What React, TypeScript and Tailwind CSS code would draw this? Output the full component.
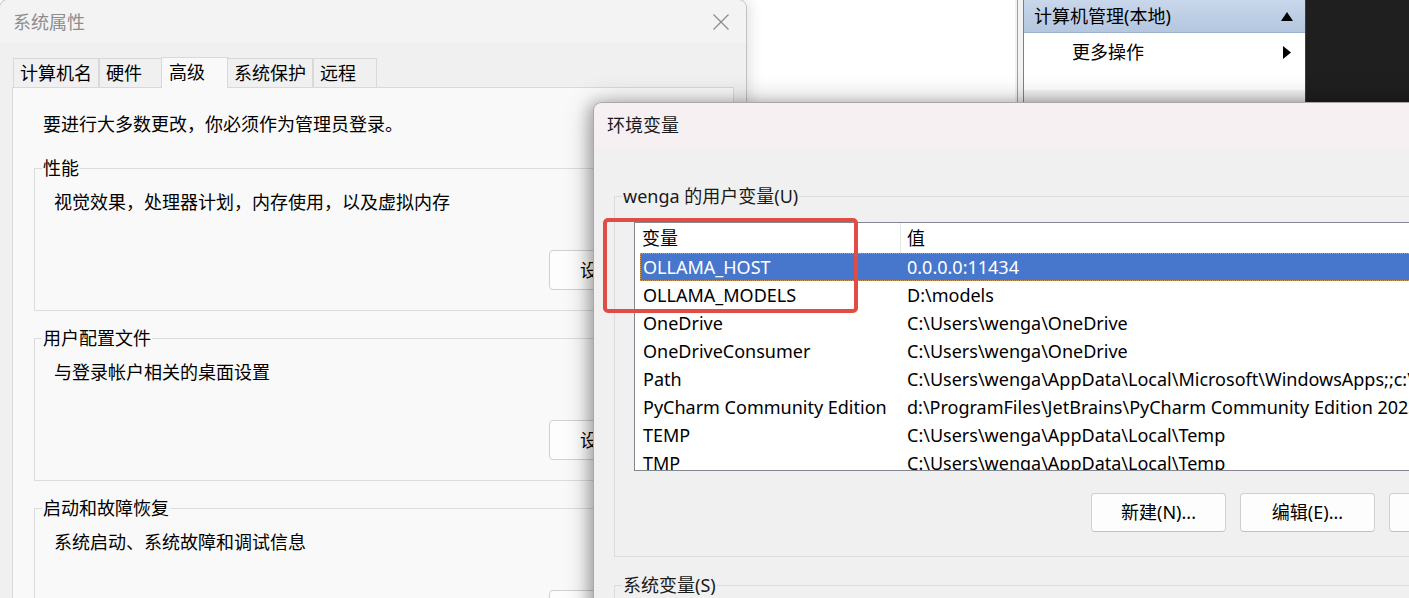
import React from "react";

const userVars: [string, string][] = [
  ["OLLAMA_HOST", "0.0.0.0:11434"],
  ["OLLAMA_MODELS", "D:\\models"],
  ["OneDrive", "C:\\Users\\wenga\\OneDrive"],
  ["OneDriveConsumer", "C:\\Users\\wenga\\OneDrive"],
  ["Path", "C:\\Users\\wenga\\AppData\\Local\\Microsoft\\WindowsApps;;c:\\ProgramFiles\\JetBrains"],
  ["PyCharm Community Edition", "d:\\ProgramFiles\\JetBrains\\PyCharm Community Edition 2023.1\\bin;"],
  ["TEMP", "C:\\Users\\wenga\\AppData\\Local\\Temp"],
  ["TMP", "C:\\Users\\wenga\\AppData\\Local\\Temp"],
];

const tabs = ["计算机名", "硬件", "高级", "系统保护", "远程"];

const groups = [
  { title: "性能", text: "视觉效果，处理器计划，内存使用，以及虚拟内存" },
  { title: "用户配置文件", text: "与登录帐户相关的桌面设置" },
  { title: "启动和故障恢复", text: "系统启动、系统故障和调试信息" },
];

function CloseIcon() {
  return (
    <svg width="16" height="16" viewBox="0 0 16 16">
      <path d="M0.5 0.5L15.5 15.5M15.5 0.5L0.5 15.5" stroke="#8a8a8a" strokeWidth="1.2" fill="none" />
    </svg>
  );
}

function ComputerManagement() {
  return (
    <div className="absolute left-[1015px] top-0 flex h-[103px] w-[394px]">
      <div className="flex w-[9px] bg-[#f2f2f2]">
        <div className="ml-[2px] w-px bg-[#a0a0a0]" />
        <div className="ml-[5px] w-px bg-[#808080]" />
      </div>
      <div className="flex w-[281px] flex-col bg-white">
        <div className="flex h-[33px] shrink-0 items-center justify-between border-b border-[#9fb2cb] bg-gradient-to-b from-[#c8d7ea] to-[#b4c7df] pl-[10px] pr-[12px] text-[18px] leading-[24px] text-black">
          <span>计算机管理(本地)</span>
          <svg width="12" height="9" viewBox="0 0 12 9">
            <polygon points="6,0 12,9 0,9" fill="#000" />
          </svg>
        </div>
        <div className="flex h-[38px] shrink-0 items-center justify-between pl-[48px] pr-[14px] text-[18px] leading-[24px] text-black">
          <span>更多操作</span>
          <svg width="8" height="13" viewBox="0 0 8 13">
            <polygon points="0,0 8,6.5 0,13" fill="#000" />
          </svg>
        </div>
        <div className="mt-auto h-[13px] bg-gradient-to-b from-[#f6f6f6] to-[#e4e4e4]" />
      </div>
      <div className="flex-1 border-l border-[#3c3c3c] bg-[#1f1f1f]" />
    </div>
  );
}

function SystemProperties() {
  return (
    <div className="absolute left-0 top-0 h-[650px] w-[746px] overflow-hidden rounded-tl-[8px] rounded-tr-[8px] bg-[#f0f0f0] shadow-[0_0_0_1px_#c2c2c2,4px_0_14px_rgba(0,0,0,0.12)]">
      <div className="flex h-[43px] items-center justify-between bg-[#f3f3f3] pl-[13px] pr-[17px]">
        <span className="text-[18px] leading-[24px] text-[#8e8e8e]">系统属性</span>
        <CloseIcon />
      </div>
      <div className="px-[12px] pt-[14px]">
        <div className="relative z-10 -mb-px ml-px flex h-[31px] items-end">
          {tabs.map((t) =>
            t === "高级" ? (
              <div key={t} className="-mx-[2px] flex h-[31px] min-w-[68px] items-center border border-b-0 border-[#d9d9d9] bg-[#f9f9f9] pb-[2px] pl-[7px] pr-[8px] text-[18px] leading-[24px] text-black">
                {t}
              </div>
            ) : (
              <div key={t} className="flex h-[30px] min-w-[64px] items-center border border-[#d9d9d9] bg-[#f0f0f0] pl-[6px] pr-[6px] text-[18px] leading-[24px] text-black">
                {t}
              </div>
            )
          )}
        </div>
        <div className="h-[600px] border border-[#d9d9d9] bg-[#f9f9f9] px-[21px] pt-[24px]">
          <p className="pl-[9px] text-[18px] leading-[24px] text-black">要进行大多数更改，你必须作为管理员登录。</p>
          {groups.map((g, i) => (
            <fieldset key={g.title} className={`${i === 0 ? "mt-[20px]" : "mt-[15px]"} min-w-0 border border-[#dcdcdc] p-0`}>
              <legend className="ml-[7px] px-[1px] text-[18px] leading-[24px] text-black">{g.title}</legend>
              <div className="px-[19px] pb-[20px] pt-[10px]">
                <p className="text-[18px] leading-[24px] text-black">{g.text}</p>
                <div className="mt-[36px] flex justify-end">
                  <button className="h-[40px] w-[143px] rounded-[4px] border border-[#d0d0d0] bg-[#fdfdfd] pl-[30px] text-left text-[18px] text-black">
                    设置(S)...
                  </button>
                </div>
              </div>
            </fieldset>
          ))}
        </div>
      </div>
    </div>
  );
}

function EnvironmentVariables() {
  return (
    <div className="absolute left-[594px] top-[103px] h-[560px] w-[970px] rounded-tl-[8px] bg-[#f0f0f0] shadow-[0_0_0_1px_#a8a8a8,-5px_0_14px_rgba(0,0,0,0.22),0_2px_30px_rgba(0,0,0,0.3)]">
      <div className="flex h-[44px] items-center rounded-tl-[8px] bg-[#f6f0f3] pl-[13px] text-[18px] leading-[24px] text-[#1a1a1a]">
        环境变量
      </div>
      <div className="px-[20px] pt-[37px]">
        <fieldset className="min-w-0 border border-[#dcdcdc] p-0">
          <legend className="ml-[7px] px-[1px] text-[18px] leading-[24px] text-[#1a1a1a]">wenga 的用户变量(U)</legend>
          <div className="px-[19px] pb-[24px] pt-[14px]">
            <div className="h-[249px] overflow-hidden border border-[#828790] bg-white text-[18px] leading-[24px] text-black">
              <div className="flex h-[30px]">
                <div className="flex w-[266px] items-center border-r border-[#e5e5e5] pl-[7px]">变量</div>
                <div className="flex items-center pl-[6px]">值</div>
              </div>
              {userVars.map(([name, value], i) => (
                <div
                  key={name}
                  className={`ml-[5px] flex h-[28px] items-center whitespace-nowrap ${
                    i === 0 ? "bg-[#4677cd] text-white outline-1 outline-dotted outline-[#d49a5a] -outline-offset-1" : ""
                  }`}
                >
                  <div className="w-[261px] shrink-0 pl-[3px]">{name}</div>
                  <div className="pl-[6px]">{value}</div>
                </div>
              ))}
            </div>
            <div className="mt-[22px] flex justify-end gap-[14px]">
              {["新建(N)...", "编辑(E)...", "删除(D)"].map((b) => (
                <button key={b} className="h-[39px] w-[135px] rounded-[4px] border border-[#d0d0d0] border-b-[#c0c0c0] bg-[#fdfdfd] text-[18px] text-black">
                  {b}
                </button>
              ))}
            </div>
          </div>
        </fieldset>
        <fieldset className="mt-[16px] h-[120px] min-w-0 border border-[#dcdcdc] p-0">
          <legend className="ml-[7px] px-[1px] text-[18px] leading-[24px] text-[#1a1a1a]">系统变量(S)</legend>
        </fieldset>
      </div>
      <div className="pointer-events-none absolute left-[9px] top-[115px] h-[95px] w-[255px] rounded-[5px] border-4 border-[#df4d45]" />
    </div>
  );
}

export default function App() {
  return (
    <div className="relative h-[598px] w-[1409px] overflow-hidden bg-white font-['Noto_Sans','Noto_Sans_CJK_SC',sans-serif]">
      <ComputerManagement />
      <SystemProperties />
      <EnvironmentVariables />
    </div>
  );
}
